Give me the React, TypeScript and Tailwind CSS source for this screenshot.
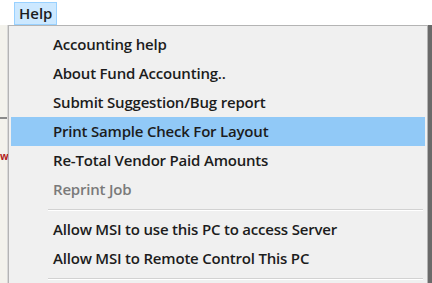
import React from "react";

const font = { fontFamily: '"Open Sans", "Noto Sans", sans-serif' };

type Item = { label: string; active?: boolean; disabled?: boolean; sep?: boolean };

const items: Item[] = [
  { label: "Accounting help" },
  { label: "About Fund Accounting.." },
  { label: "Submit Suggestion/Bug report" },
  { label: "Print Sample Check For Layout", active: true },
  { label: "Re-Total Vendor Paid Amounts" },
  { label: "Reprint Job", disabled: true },
  { label: "", sep: true },
  { label: "Allow MSI to use this PC to access Server" },
  { label: "Allow MSI to Remote Control This PC" },
  { label: "", sep: true },
];

function MenuRow({ item }: { item: Item }) {
  if (item.sep) {
    return (
      <div className="h-[11px] pt-[5px] pl-[37px] pr-[2px]">
        <div className="h-px bg-[#d2d2d2]" />
        <div className="h-px bg-white" />
      </div>
    );
  }
  return (
    <div
      className={
        "h-[29px] flex items-center pl-[42px] text-[15px] font-semibold tracking-[-0.2px] " +
        (item.active ? "bg-[#91c9f7] text-[#1c1c1c]" : item.disabled ? "text-[#7a7a7a]" : "text-[#1c1c1c]")
      }
    >
      {item.label}
    </div>
  );
}

export default function App() {
  return (
    <div className="w-[432px] h-[283px] overflow-hidden bg-white" style={font}>
      <div className="h-[25px] flex items-start pl-[14px] pt-[2px] bg-white">
        <div className="h-[23px] px-[4px] flex items-center bg-[#cce8ff] border border-[#99d1ff] text-[15px] font-semibold text-[#1c1c1c]">
          Help
        </div>
      </div>
      <div className="flex h-[258px]">
        <div className="w-[8px] bg-[#f3f2ec] border-r border-[#d8d8d8] flex flex-col">
          <div className="h-[92px]" />
          <div className="h-[2px] bg-[#8a8a8a]" />
          <div className="h-[32px]" />
          <div className="text-[10px] leading-none text-[#b02020] font-bold">w</div>
        </div>
        <div className="flex-1 bg-[#f0f0f0] border-t border-l border-r border-[#b4b4b4] pt-[4px] px-[2px]">
          {items.map((it, i) => (
            <MenuRow key={i} item={it} />
          ))}
        </div>
        <div className="w-[4px] bg-[#6a6a6a]" />
      </div>
    </div>
  );
}
